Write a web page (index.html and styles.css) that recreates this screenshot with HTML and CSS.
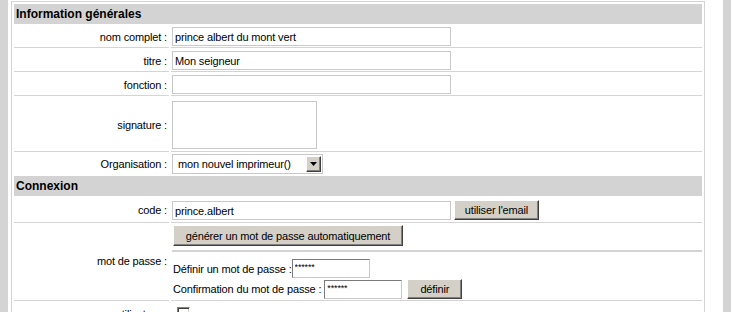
FILE: index.html
```html
<!DOCTYPE html>
<html lang="fr">
  <head>
    <meta charset="UTF-8" />
    <meta name="viewport" content="width=device-width, initial-scale=1.0" />
    <title>Fiche utilisateur</title>
    <link rel="stylesheet" href="styles.css">
  </head>
  <body>
    <div class="page">
      <table class="form">
        <colgroup>
          <col class="col-label" />
          <col />
        </colgroup>
        <tr>
          <th colspan="2">Information générales</th>
        </tr>
        <tr>
          <td class="label">nom complet :</td>
          <td class="value"><input class="text" type="text" value="prince albert du mont vert" /></td>
        </tr>
        <tr>
          <td class="label">titre :</td>
          <td class="value"><input class="text" type="text" value="Mon seigneur" /></td>
        </tr>
        <tr>
          <td class="label">fonction :</td>
          <td class="value"><input class="text" type="text" value="" /></td>
        </tr>
        <tr>
          <td class="label">signature :</td>
          <td class="value"><textarea class="area"></textarea></td>
        </tr>
        <tr class="no-line">
          <td class="label">Organisation :</td>
          <td class="value flat">
            <div class="select">
              <span>mon nouvel imprimeur()</span>
              <span class="select-btn">
                <svg width="7" height="4" viewBox="0 0 7 4"><polygon points="0,0 7,0 3.5,4" fill="#000" /></svg>
              </span>
            </div>
          </td>
        </tr>
        <tr>
          <th colspan="2">Connexion</th>
        </tr>
        <tr>
          <td class="label">code :</td>
          <td class="value code">
            <div class="inline">
              <input class="text" type="text" value="prince.albert" />
              <button class="btn btn-email">utiliser l'email</button>
            </div>
          </td>
        </tr>
        <tr>
          <td class="label label-pw">mot de passe :</td>
          <td class="value flat">
            <div class="gen">
              <button class="btn btn-gen">générer un mot de passe automatiquement</button>
            </div>
            <div class="pw">
              <div class="pw-line">
                <span>Définir un mot de passe :</span>
                <input class="pass" type="text" value="******" />
              </div>
              <div class="pw-line second">
                <span>Confirmation du mot de passe :</span>
                <input class="pass spaced" type="text" value="******" />
                <button class="btn btn-set">définir</button>
              </div>
            </div>
          </td>
        </tr>
        <tr>
          <td class="label">utilisateur :</td>
          <td class="value check"><span class="checkbox"></span></td>
        </tr>
      </table>
    </div>
  </body>
</html>
```

FILE: styles.css
```css
html,
body {
  margin: 0;
  height: 100%;
  overflow: hidden;
}
body {
  font-family: "Liberation Sans", Arial, sans-serif;
  font-size: 11px;
  letter-spacing: -0.15px;
  color: #000;
  background: #fff;
}
.page {
  height: 100%;
  box-sizing: border-box;
  border-left: 8px solid #d4d4d4;
  border-right: 8px solid #d4d4d4;
  padding: 1px 0 0 3px;
}
.form {
  width: 694px;
  table-layout: fixed;
  border: 1px solid #d4d4d4;
  border-spacing: 2px;
}
.col-label {
  width: 155px;
}
th {
  height: 20px;
  padding: 0 2px;
  background: #d3d3d3;
  font-size: 12px;
  font-weight: bold;
  letter-spacing: 0;
  text-align: left;
  line-height: 20px;
}
td {
  padding: 0;
  border-bottom: 1px solid #d4d4d4;
  vertical-align: middle;
}
.no-line td {
  border-bottom: none;
}
.label {
  text-align: right;
  padding-right: 2px;
}
.label-pw {
  padding-bottom: 4px;
}
.value {
  padding: 1px 0 1px 1px;
}
.value.flat {
  padding: 0 0 0 1px;
}
.value.code {
  padding: 2px 0 2px 1px;
}
.value.check {
  padding: 4px 0 4px 6px;
}
input,
textarea,
button {
  font-family: "Liberation Sans", Arial, sans-serif;
  font-size: 11px;
  letter-spacing: -0.15px;
  color: #000;
  margin: 0;
  box-sizing: border-box;
}
.text {
  display: block;
  width: 279px;
  height: 19px;
  padding: 0 2px;
  border: 1px solid #c8c8c8;
  outline: none;
}
.area {
  display: block;
  width: 145px;
  height: 48px;
  margin: 2px 0 1px;
  border: 1px solid #c8c8c8;
  resize: none;
}
.select {
  display: flex;
  align-items: center;
  width: 151px;
  height: 20px;
  box-sizing: border-box;
  border: 1px solid #c8c8c8;
  padding-left: 5px;
}
.select-btn {
  display: flex;
  align-items: center;
  justify-content: center;
  margin-left: auto;
  margin-right: 1px;
  width: 15px;
  height: 16px;
  box-sizing: border-box;
  background: #d4d0c8;
  border: 1px solid;
  border-color: #fff #404040 #404040 #fff;
  box-shadow: inset -1px -1px #808080;
}
.inline {
  display: flex;
  align-items: flex-end;
}
.btn {
  height: 20px;
  padding: 0;
  background: #d4d0c8;
  border: 1px solid;
  border-color: #fff #404040 #404040 #fff;
  box-shadow: inset -1px -1px #808080;
  cursor: pointer;
}
.btn-email {
  width: 85px;
  margin-left: 3px;
}
.gen {
  padding: 0 0 4px 1px;
  border-bottom: 2px solid #d4d4d4;
}
.btn-gen {
  display: block;
  width: 230px;
  height: 21px;
}
.pw {
  padding: 7px 0 1px 1px;
}
.pw-line {
  display: flex;
  align-items: center;
  height: 19px;
}
.pw-line.second {
  height: 20px;
  margin-top: 1px;
}
.pass {
  width: 78px;
  height: 19px;
  padding: 0 2px 3px;
  font-size: 9px;
  border: 1px solid;
  border-color: #7a7a7a #c8c8c8 #c8c8c8 #7a7a7a;
  outline: none;
}
.pass.spaced {
  margin-left: 3px;
}
.btn-set {
  width: 55px;
  margin-left: 5px;
}
.checkbox {
  display: block;
  width: 13px;
  height: 13px;
  box-sizing: border-box;
  border: 1px solid;
  border-color: #808080 #fff #fff #808080;
  box-shadow: inset 1px 1px #404040, inset -1px -1px #d4d0c8;
  background: #fff;
}
```
